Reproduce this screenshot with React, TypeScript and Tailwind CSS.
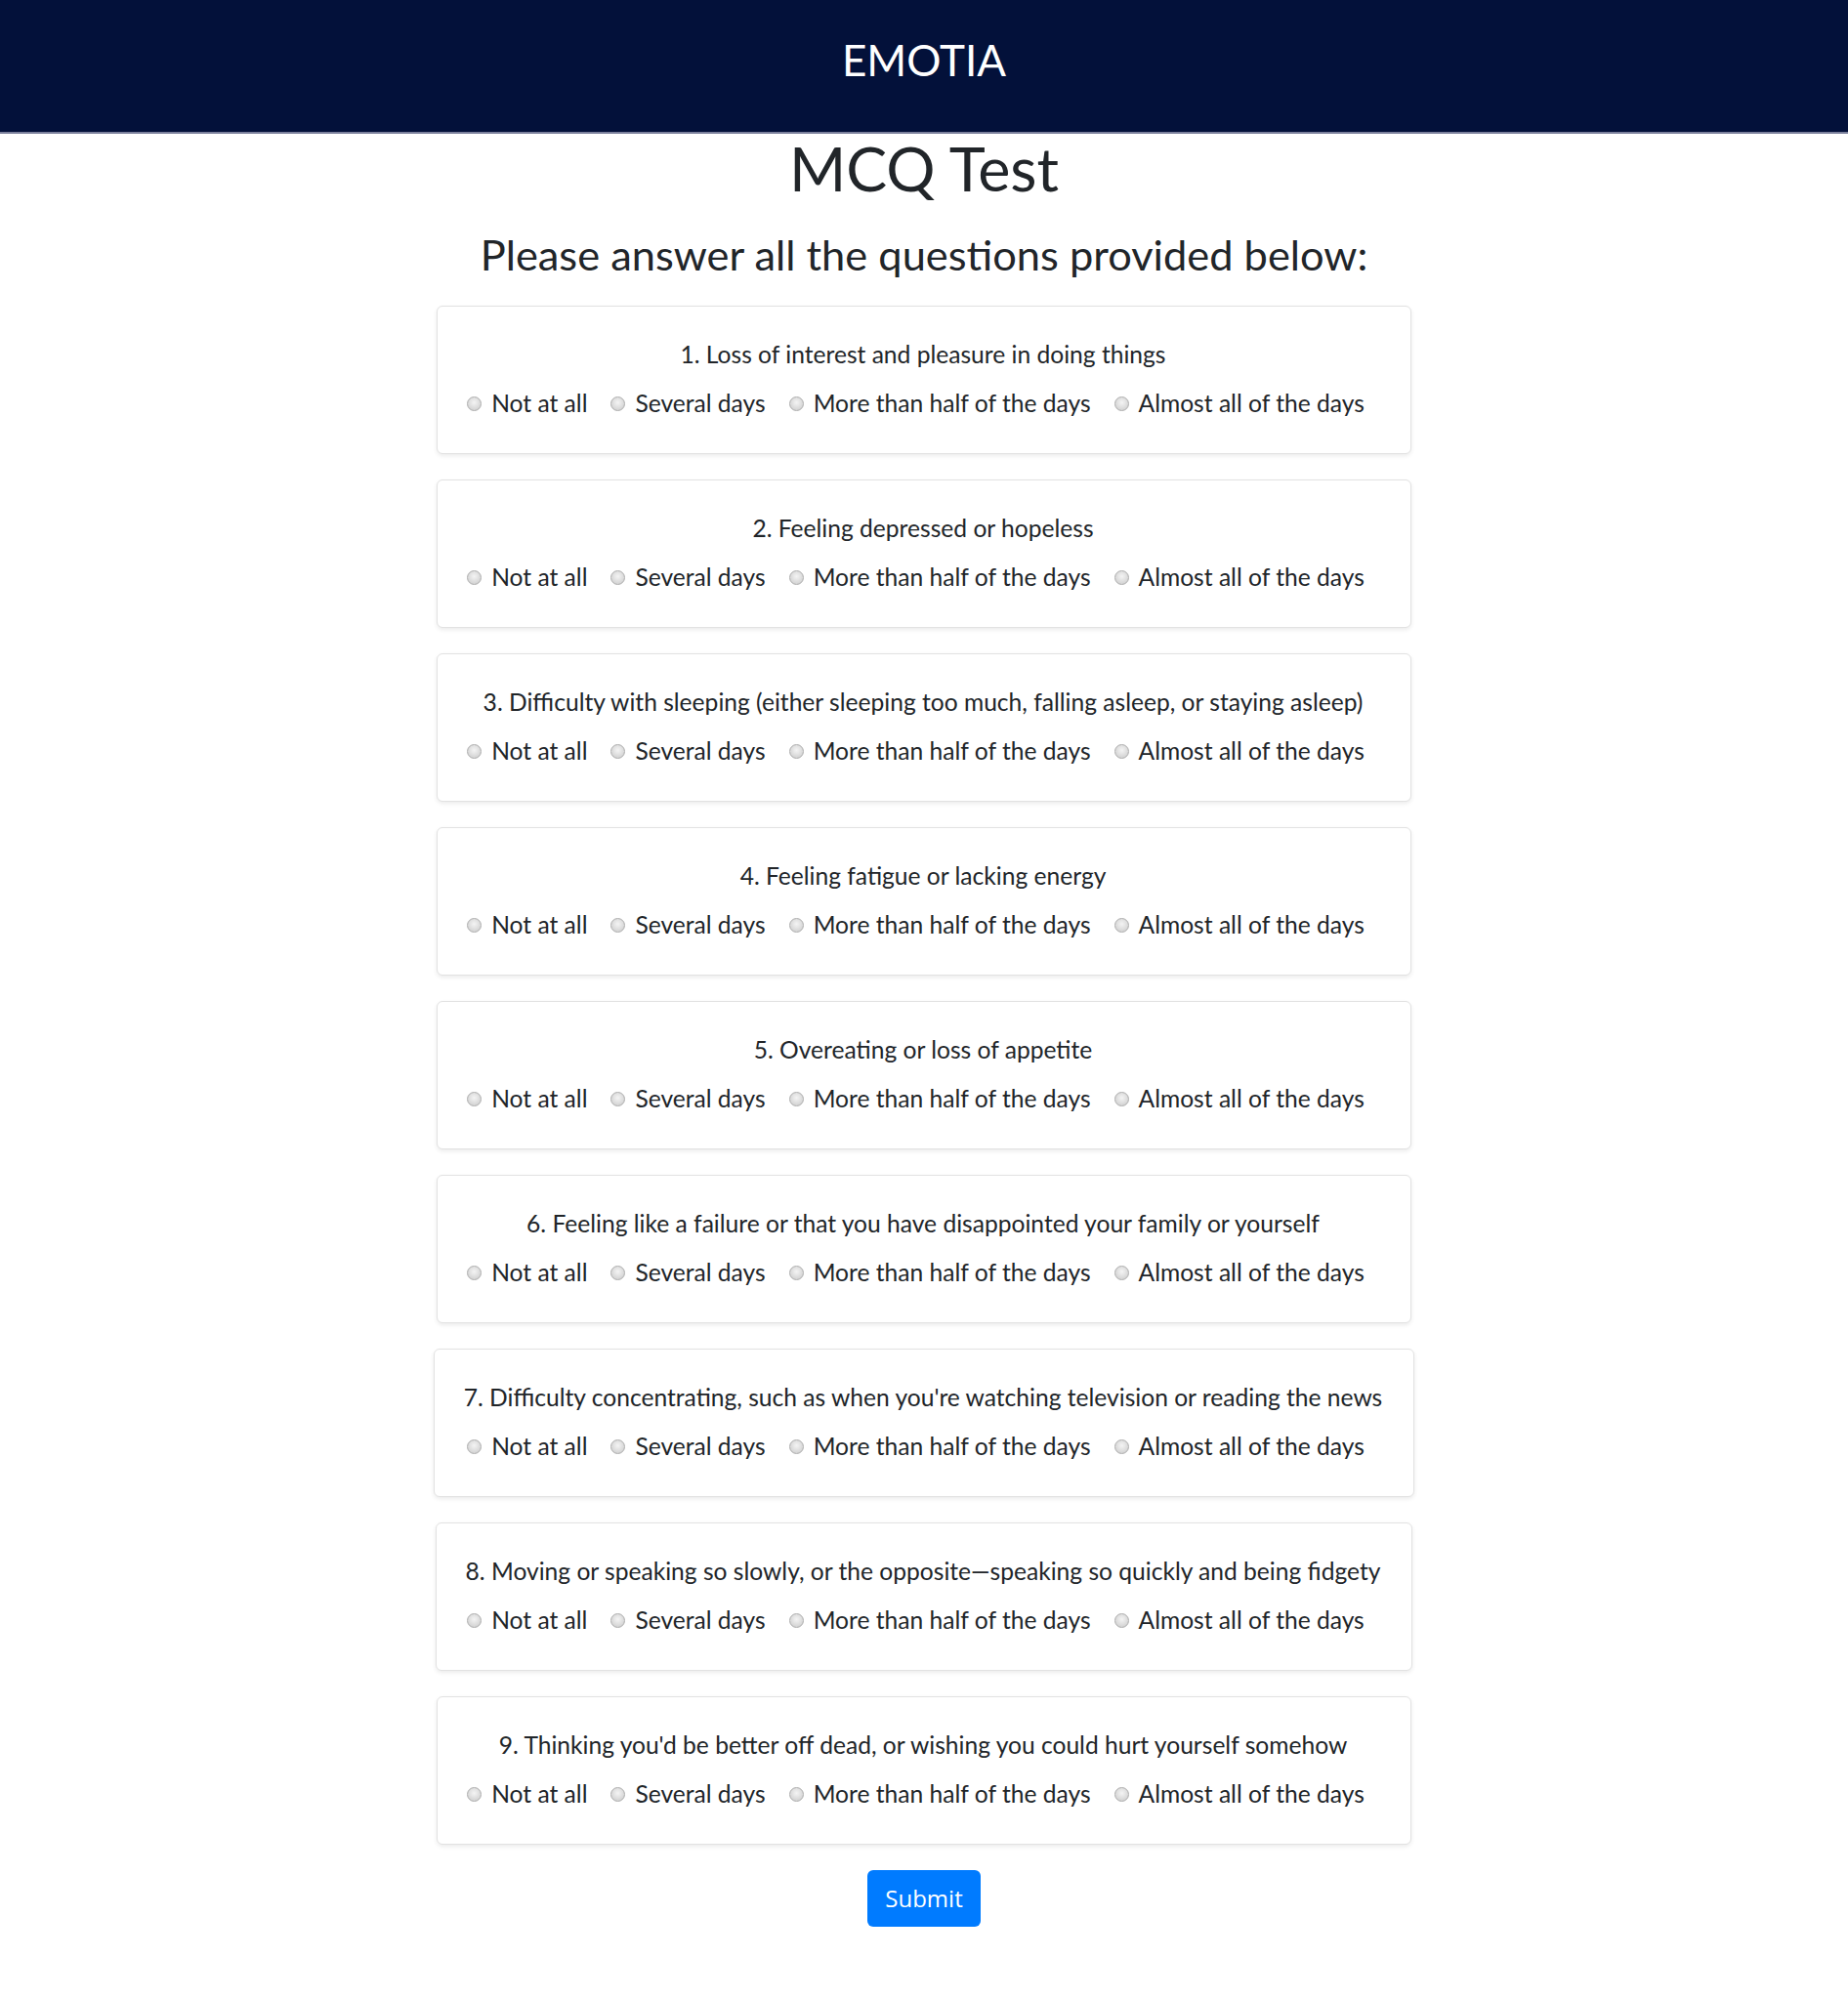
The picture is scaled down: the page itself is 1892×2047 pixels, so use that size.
import { useState } from 'react';

const questions = [
  'Loss of interest and pleasure in doing things',
  'Feeling depressed or hopeless',
  'Difficulty with sleeping (either sleeping too much, falling asleep, or staying asleep)',
  'Feeling fatigue or lacking energy',
  'Overeating or loss of appetite',
  'Feeling like a failure or that you have disappointed your family or yourself',
  "Difficulty concentrating, such as when you're watching television or reading the news",
  'Moving or speaking so slowly, or the opposite\u2014speaking so quickly and being fidgety',
  "Thinking you'd be better off dead, or wishing you could hurt yourself somehow",
];

const options = ['Not at all', 'Several days', 'More than half of the days', 'Almost all of the days'];

export default function App() {
  const [answers, setAnswers] = useState<Record<number, number>>({});

  return (
    <div className="min-h-screen bg-white text-[#212529] font-['Lato',sans-serif]">
      {/* Header */}
      <header className="h-[137px] bg-[#03113a] border-b-2 border-[#7b809c] flex items-center justify-center">
        <h1 className="text-[44px] leading-none text-white pb-[14px]">EMOTIA</h1>
      </header>

      <main className="flex flex-col items-center pb-[75px]">
        <h1 className="text-[62.8px] leading-[69px]">MCQ Test</h1>
        <h3 className="mt-[29px] text-[43.4px] leading-[50px]">Please answer all the questions provided below:</h3>

        <div className="mt-[28px] flex flex-col items-center">
          {questions.map((q, qi) => (
            <div
              key={qi}
              className="w-fit mb-[26px] pl-[30px] pr-[32px] pt-[30px] pb-[32px] bg-white border border-[#e2e2e2] rounded-[6px] shadow-[0_2px_4px_rgba(0,0,0,0.08)]"
            >
              <p className="text-center text-[24.6px] leading-[38px] mb-[12px]">
                {qi + 1}. {q}
              </p>
              <div className="flex justify-center pr-[15px] gap-[24px] text-[24.6px] leading-[38px]">
                {options.map((o, oi) => (
                  <label
                    key={oi}
                    className="flex items-center gap-[10px] cursor-pointer"
                    onClick={() => setAnswers({ ...answers, [qi]: oi })}
                  >
                    <span className="w-[15px] h-[15px] rounded-full border border-[#adadad] bg-[radial-gradient(circle_at_50%_40%,#f4f4f4,#c9c9c9)] flex items-center justify-center">
                      {answers[qi] === oi && <span className="w-[7px] h-[7px] rounded-full bg-[#444]" />}
                    </span>
                    <span>{o}</span>
                  </label>
                ))}
              </div>
            </div>
          ))}
        </div>

        <button className="h-[58px] w-[116px] rounded-[6px] bg-[#007bff] text-white text-[24px] font-['Open_Sans',sans-serif]">
          Submit
        </button>
      </main>
    </div>
  );
}
